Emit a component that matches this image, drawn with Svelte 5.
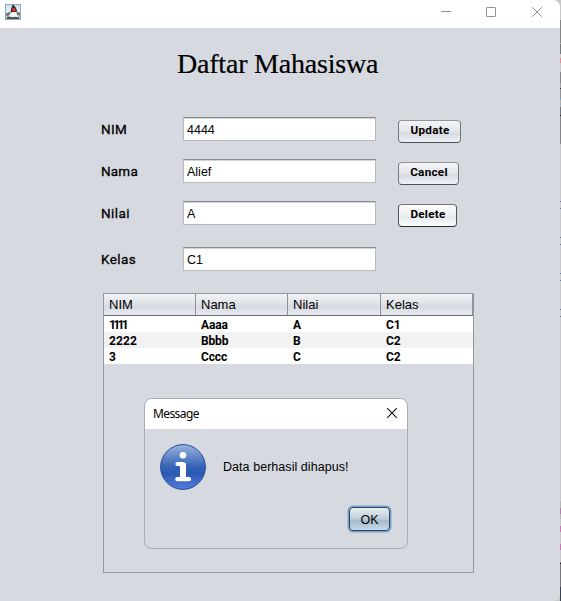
<script>
  const fields = [
    { label: 'NIM', value: '4444', action: 'Update', width: 63, ls: 0.3, lw: 0.3 },
    { label: 'Nama', value: 'Alief', action: 'Cancel', width: 61, ls: 0.3, lw: 0.2 },
    { label: 'Nilai', value: 'A', action: 'Delete', width: 59, ls: 0.25, lw: 0.4 },
    { label: 'Kelas', value: 'C1', lw: 0.4 }
  ];
  const columns = ['NIM', 'Nama', 'Nilai', 'Kelas'];
  const rows = [
    ['1111', 'Aaaa', 'A', 'C1'],
    ['2222', 'Bbbb', 'B', 'C2'],
    ['3', 'Cccc', 'C', 'C2']
  ];
  const edge = [
    [20, 23, '#858585'], [43, 1, '#aaa'], [44, 10, '#77777a'], [54, 4, '#cfc9c9'],
    [58, 5, '#df8f8c'], [63, 9, '#c9c9ca'], [72, 11, '#858588'], [83, 5, '#a0a0a3'],
    [88, 1, '#333'], [89, 9, '#929295'], [98, 2, '#7d9fba'], [100, 7, '#aaaeb2'],
    [107, 8, '#75777f'], [115, 1, '#222'], [116, 28, '#858588'],
    [201, 1, '#6876a5'], [208, 1, '#6876a5'], [237, 1, '#6876a5'], [244, 1, '#6876a5'],
    [273, 1, '#6876a5'], [280, 1, '#6876a5'], [309, 1, '#6876a5'], [316, 1, '#6876a5'],
    [501, 7, '#b8b7b7'], [508, 6, '#b080aa'], [514, 5, '#b8b5b8'], [526, 6, '#cb75b4'],
    [544, 6, '#cb75b4'], [562, 1, '#a76898'], [563, 1, '#202026'], [564, 23, '#77777c'],
    [587, 14, '#394354']
  ];
</script>

<div class="desktop">
  <main class="window">
    <header class="titlebar">
      <svg class="java" width="16" height="16" viewBox="0 0 16 16">
        <defs><linearGradient id="jb" x2="0" y2="1"><stop stop-color="#cbdbe5" /><stop offset=".55" stop-color="#eef2f4" /><stop offset="1" stop-color="#91a6b5" /></linearGradient></defs>
        <rect x=".5" y=".5" width="15" height="15" fill="url(#jb)" stroke="#8faabd" />
        <path d="M1 9.5l3-1.5 2 1-2 2.500-3 .5zM11 8l4 .5v3l-3-.5z" fill="#6d7579" />
        <path d="M6 8h5l1.500 5H4z" fill="#f8f8f6" />
        <path d="M8 0l3 4 1.300 3.500L10 8H7L5.500 9 6 5z" fill="#252b30" />
        <circle cx="8.800" cy="5.600" r="1.900" fill="#e52e2a" />
        <path d="M2 13l3-.5 2 .8 3-.5 4 .7V15H2z" fill="#4c5356" />
        <path d="M4 11.500l3-.5 2 1.500-3 .5z" fill="#eef1f2" />
      </svg>
      <div class="controls">
        <svg width="10" height="10" viewBox="0 0 10 10"><path d="M0 5.500h10" transform="translate(0 -1)" /></svg>
        <svg width="10" height="10" viewBox="0 0 10 10"><rect x=".5" y=".5" width="9" height="9" rx=".5" /></svg>
        <svg width="10" height="10" viewBox="0 0 10 10"><path d="M.2.2l9.600 9.600M9.800.2L.2 9.800" /></svg>
      </div>
    </header>

    <h1>Daftar Mahasiswa</h1>

    <form onsubmit={(e) => e.preventDefault()}>
      {#each fields as f}
        <div class="row">
          <label for={f.label} style="letter-spacing: {f.lw}px">{f.label}</label>
          <input id={f.label} value={f.value} />
          {#if f.action}
            <button class="action" class:lit={f.action === 'Delete'} type="button" style="width: {f.width}px; letter-spacing: {f.ls}px">{f.action}</button>
          {/if}
        </div>
      {/each}
    </form>

    <section class="grid">
      <div class="line head">{#each columns as c}<span>{c}</span>{/each}</div>
      {#each rows as r}
        <div class="line data">{#each r as cell}<span class:ones={cell === '1111'} class:twos={cell === '2222'}>{cell}</span>{/each}</div>
      {/each}
    </section>
  </main>

  <div class="dialog" role="dialog" aria-label="Message">
    <div class="dialog-title">
      <span>Message</span>
      <svg width="10" height="10" viewBox="0 0 10 10"><path d="M.2.2l9.600 9.600M9.800.2L.2 9.800" /></svg>
    </div>
    <div class="message">
      <svg width="46" height="46" viewBox="0 0 46 46">
        <defs><linearGradient id="ib" x2="0" y2="1"><stop stop-color="#9ab4df" /><stop offset=".5" stop-color="#3462b5" /><stop offset=".65" stop-color="#2b59b2" /><stop offset="1" stop-color="#507edb" /></linearGradient></defs>
        <circle cx="23" cy="23" r="22.400" fill="url(#ib)" stroke="#244b98" />
        <circle cx="23" cy="11.200" r="3.300" fill="#fff" />
        <path d="M17.500 20H23V35M17.300 35.200H29" fill="none" stroke="#fff" stroke-width="4.200" stroke-linecap="round" stroke-linejoin="round" />
        <path d="M20 19h6v16h-6z" fill="#fff" />
      </svg>
      <span>Data berhasil dihapus!</span>
    </div>
    <div class="footer"><button class="ok" type="button">OK</button></div>
  </div>

  <div class="edge">
    {#each edge as [top, height, color]}<i style="top: {top}px; height: {height}px; background: {color}"></i>{/each}
  </div>
</div>

<style>
  .desktop { position: relative; width: 561px; height: 601px; overflow: hidden; background: #c8c8cb; font-family: "Liberation Sans", Arial, sans-serif; font-size: 13px; color: #000; }
  .window { width: 560px; height: 601px; background: #d6d9e0; display: flex; flex-direction: column; border-radius: 0 7px 7px 0; overflow: hidden; }
  .titlebar { height: 28px; flex: none; box-sizing: border-box; padding: 4px 18px 0 5px; background: #fff; display: flex; justify-content: space-between; }
  .controls { display: flex; padding-top: 3px; }
  .controls svg { fill: none; stroke: #929292; stroke-width: 1; margin-left: 35px; }
  .controls svg:last-child { margin-left: 36px; }
  h1 { margin: 17px 0 0 177px; height: 38px; font: 400 28px/38px "Liberation Serif", serif; letter-spacing: -0.2px; white-space: nowrap; -webkit-text-stroke: 0.2px #000; }
  form { display: flex; flex-direction: column; gap: 18px; margin: 34px 0 0 101px; }
  .row { display: flex; height: 24px; align-items: flex-start; }
  .row:last-child { margin-top: 4px; }
  label { width: 82px; font: 400 13.5px/25px Roboto, sans-serif; -webkit-text-stroke: 0.3px #000; }
  input { box-sizing: border-box; width: 193px; height: 24px; padding: 2px 3px 0; border: 1px solid #b7b9bd; border-top-color: #878a90; border-radius: 0; background: #fff; box-shadow: inset 0 1px #d3d4d6; outline: none; font: 12.5px "Liberation Sans", Arial, sans-serif; color: #000; }
  button { box-sizing: border-box; padding: 0; color: #000; }
  .action { height: 23px; margin: 3px 0 0 22px; padding: 0 0 3px 1px; border: 1px solid #73767c; border-top-color: #92959a; border-bottom-color: #4e5258; border-radius: 4px; background: linear-gradient(#f4f5f7, #e5e7eb 45%, #d8dbe1 60%, #eff1f5); font: 700 11.700px Roboto, sans-serif; }
  .action.lit { border-color: #777 #50535a #292c33; background: linear-gradient(#fcfcfd, #f0f1f4 45%, #e5e8ed 60%, #fff); }
  .grid { box-sizing: border-box; width: 371px; height: 280px; margin: 22px 0 0 103px; border: 1px solid #9297a1; }
  .line { display: grid; grid-template-columns: 92px 92px 93px 92px; }
  .head { height: 22px; box-sizing: border-box; border-bottom: 1px solid #666b75; background: linear-gradient(#f2f3f5, #dfe2e7 45%, #d6d9df 60%, #e8ebf1); line-height: 21px; font-size: 13px; }
  .line span { padding-left: 5px; }
  .head span { border-right: 1px solid #8d929c; }
  .data { height: 16px; background: #fff; font: 700 12px/18px Roboto, sans-serif; letter-spacing: -0.15px; }
  .data .ones { letter-spacing: -2.700px; }
  .data .ones { letter-spacing: -2.600px; }
  .data .twos { letter-spacing: 0.150px; }
  .data:nth-child(odd) { background: #f2f2f2; }
  .dialog { position: absolute; left: 144px; top: 398px; width: 264px; height: 151px; box-sizing: border-box; border: 1px solid #a9acb1; border-radius: 8px; overflow: hidden; background: #d6d9e0; display: flex; flex-direction: column; }
  .dialog-title { height: 30px; box-sizing: border-box; padding: 0 10px 0 8px; background: #fff; display: flex; align-items: center; justify-content: space-between; font: 12px "Noto Sans", sans-serif; letter-spacing: -0.6px; }
  .dialog-title svg { fill: none; stroke: #111; stroke-width: 1.1; margin-top: -2px; overflow: visible; }
  .dialog-title span { margin-top: -1px; }
  .message { display: flex; align-items: center; gap: 17px; padding: 15px 0 0 15px; font-size: 12.5px; letter-spacing: 0.05px; }
  .footer { display: flex; justify-content: flex-end; padding: 17px 17px 0 0; }
  .ok { width: 41px; height: 24px; padding-top: 1px; border: 1px solid #30455d; border-radius: 4px; background: linear-gradient(#e6edf3, #c3d0db 45%, #a7bbcb 60%, #c5d9e9); box-shadow: 0 0 0 1.5px #75a5d0; font: 12.5px "Liberation Sans", Arial, sans-serif; }
  .edge { position: absolute; right: 0; top: 0; width: 1px; height: 601px; }
  .edge i { position: absolute; left: 0; width: 1px; }
</style>
